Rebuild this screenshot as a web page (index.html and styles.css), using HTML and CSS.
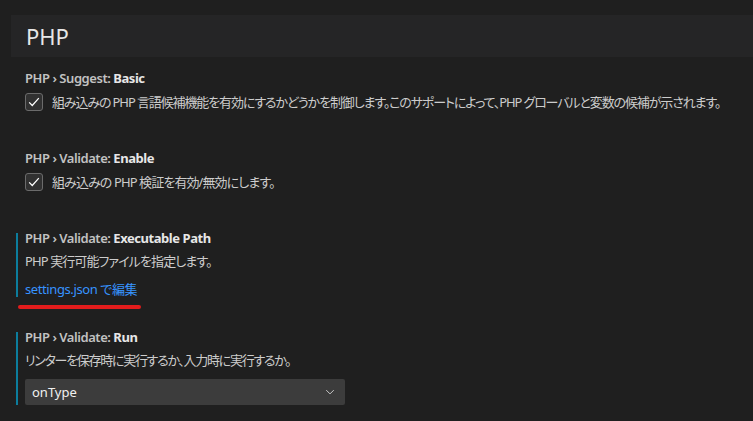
FILE: index.html
```html
<!DOCTYPE html>
<html lang="ja">
<head>
<meta charset="utf-8">
<link rel="stylesheet" href="styles.css">
</head>
<body>
<div class="page">
  <div class="group-header"><span class="group-title">PHP</span></div>

  <div class="setting s1">
    <div class="title"><span class="cat">PHP › Suggest: </span><span class="label">Basic</span></div>
    <div class="check-row">
      <span class="checkbox"><svg width="14" height="14" viewBox="0 0 16 16"><path d="M2.5 8.5 L6 12 L13.5 3.5" fill="none" stroke="#ffffff" stroke-width="1.4"/></svg></span>
      <span class="desc long">組み込みの PHP 言語候補機能を有効にするかどうかを制御します。このサポートによって、PHP グローバルと変数の候補が示されます。</span>
    </div>
  </div>

  <div class="setting s2">
    <div class="title"><span class="cat">PHP › Validate: </span><span class="label">Enable</span></div>
    <div class="check-row">
      <span class="checkbox"><svg width="14" height="14" viewBox="0 0 16 16"><path d="M2.5 8.5 L6 12 L13.5 3.5" fill="none" stroke="#ffffff" stroke-width="1.4"/></svg></span>
      <span class="desc">組み込みの PHP 検証を有効/無効にします。</span>
    </div>
  </div>

  <div class="setting modified s3">
    <div class="title"><span class="cat">PHP › Validate: </span><span class="label">Executable Path</span></div>
    <div class="desc block">PHP 実行可能ファイルを指定します。</div>
    <div class="link">settings.json で編集</div>
    <div class="red-mark"></div>
  </div>

  <div class="setting modified s4">
    <div class="title"><span class="cat">PHP › Validate: </span><span class="label">Run</span></div>
    <div class="desc block long-kana">リンターを保存時に実行するか、入力時に実行するか。</div>
    <div class="select">
      <span class="select-value">onType</span>
      <svg class="chevron" width="12" height="12" viewBox="0 0 16 16"><path d="M3 5.5 L8 10.5 L13 5.5" fill="none" stroke="#cccccc" stroke-width="1.3"/></svg>
    </div>
  </div>
</div>
</body>
</html>
```

FILE: styles.css
```css
html, body {
  margin: 0;
  padding: 0;
  background: #1f1f1f;
}
body {
  font-family: "Noto Sans", "Noto Sans CJK JP", sans-serif;
  color: #cccccc;
  width: 753px;
  height: 421px;
  overflow: hidden;
}
.page {
  padding-top: 15px;
}
.group-header {
  margin-left: 11px;
  height: 42px;
  background: #252526;
  display: flex;
  align-items: center;
  padding-left: 15px;
}
.group-title {
  font-size: 22px;
  color: #e7e7e7;
  line-height: 1;
  margin-top: -1px;
}
.setting {
  position: relative;
  margin-left: 16px;
  padding-left: 9px;
}
.modified::before {
  content: "";
  position: absolute;
  left: 0;
  top: 4px;
  bottom: 0;
  width: 2px;
  background: #0c7d9d;
}
.s3::before { bottom: 1px; }
.s1 { margin-top: 12px; }
.s2 { margin-top: 38px; }
.s3 { margin-top: 38px; }
.s4 { margin-top: 30px; }
.title {
  font-size: 13px;
  line-height: 18px;
  font-weight: 600;
  letter-spacing: -0.45px;
  white-space: nowrap;
}
.cat { color: #c2c2c2; }
.label { color: #e7e7e7; font-weight: 700; }
.desc {
  font-family: "Noto Sans", "Noto Sans CJK JP", sans-serif;
  font-feature-settings: "palt";
  font-size: 13px;
  line-height: 18px;
  letter-spacing: -0.9px;
  color: #cccccc;
  white-space: nowrap;
}
.desc.long { letter-spacing: -1.12px; }
.desc.long-kana { letter-spacing: -1.3px; }
.desc.block { margin-top: 5px; }
.check-row {
  margin-top: 6px;
  display: flex;
  align-items: center;
  gap: 9px;
  height: 18px;
}
.checkbox {
  box-sizing: border-box;
  width: 18px;
  height: 18px;
  border: 1px solid #6b6b6b;
  border-radius: 3px;
  background: #313131;
  display: flex;
  align-items: center;
  justify-content: center;
  flex: none;
}
.link {
  margin-top: 10px;
  font-family: "Noto Sans", "Noto Sans CJK JP", sans-serif;
  font-feature-settings: "palt";
  font-size: 13px;
  line-height: 18px;
  letter-spacing: -0.4px;
  color: #3794ff;
}
.red-mark {
  position: absolute;
  left: 2px;
  top: 76px;
  width: 123px;
  height: 4px;
  border-radius: 2px;
  background: #e31c1c;
}
.select {
  margin-top: 10px;
  width: 320px;
  height: 26px;
  box-sizing: border-box;
  background: #3c3c3c;
  border-radius: 2px;
  display: flex;
  align-items: center;
  justify-content: space-between;
  padding: 0 9px 0 7px;
}
.select-value {
  font-size: 13px;
  color: #f0f0f0;
}
```
